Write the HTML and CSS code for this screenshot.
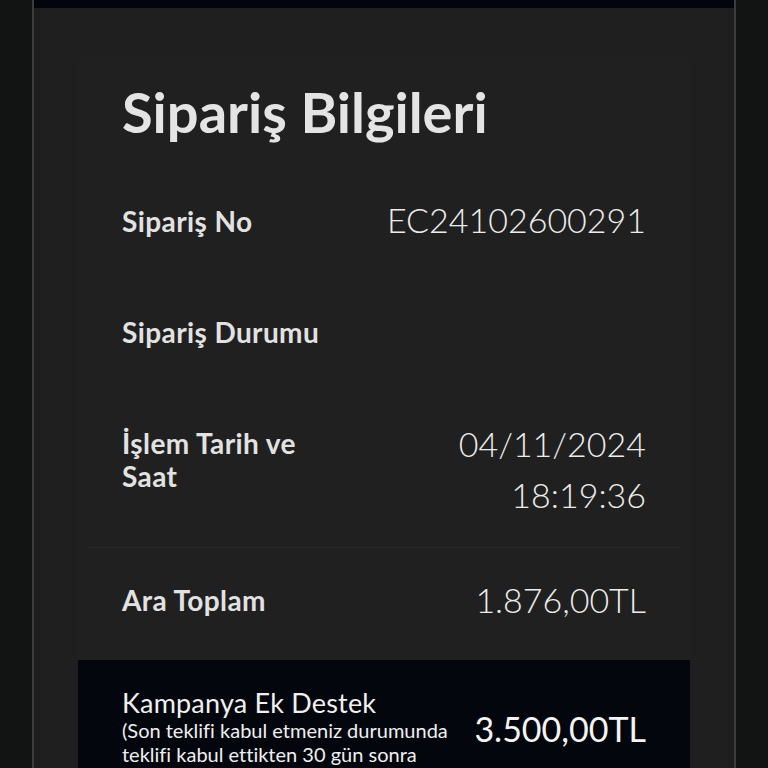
FILE: index.html
```html
<!DOCTYPE html>
<html lang="tr">
<head>
<meta charset="utf-8">
<link rel="stylesheet" href="styles.css">
</head>
<body>
<div class="frame">
  <div class="topbar"></div>
  <div class="card">
    <div class="header">
      <h1 class="title">Sipariş Bilgileri</h1>
    </div>
    <div class="rows">
      <div class="row row-no">
        <div class="label">Sipariş No</div>
        <div class="value">EC24102600291</div>
      </div>
      <div class="row row-status">
        <div class="label">Sipariş Durumu</div>
        <div class="value"></div>
      </div>
      <div class="row row-date">
        <div class="label">İşlem Tarih ve<br>Saat</div>
        <div class="value value-stack"><span>04/11/2024</span><span>18:19:36</span></div>
      </div>
      <div class="divider"></div>
      <div class="row row-sub">
        <div class="label">Ara Toplam</div>
        <div class="value">1.876,00TL</div>
      </div>
    </div>
    <div class="promo">
      <div class="promo-text">
        <div class="promo-title">Kampanya Ek Destek</div>
        <div class="promo-note">(Son teklifi kabul etmeniz durumunda teklifi kabul ettikten 30 gün sonra</div>
      </div>
      <div class="promo-value">3.500,00TL</div>
    </div>
  </div>
</div>
</body>
</html>
```

FILE: styles.css
```css
* { box-sizing: border-box; }
html, body {
  margin: 0;
  padding: 0;
  background: #111413;
  height: 768px;
  overflow: hidden;
}
body {
  font-family: "Lato", "Open Sans", sans-serif;
  color: #e6e6e6;
  font-variant-ligatures: none;
}
.frame {
  margin: 0 32px;
  height: 768px;
  border-left: 2px solid #3b3c3c;
  border-right: 2px solid #3b3c3c;
  background: #1f1f1f;
}
.topbar {
  height: 8px;
  background: #02050d;
}
.card {
  margin: 50px 44px 0;
  background: #202020;
}
.header {
  padding: 24px 44px 0;
  height: 145px;
}
.title {
  margin: 0;
  font-size: 56px;
  font-weight: 700;
  line-height: 60px;
  color: #e4e4e4;
}
.rows {
  padding: 0 44px;
}
.row {
  display: flex;
  justify-content: space-between;
  align-items: flex-start;
}
.label {
  font-size: 28px;
  font-weight: 700;
  line-height: 33px;
  letter-spacing: 0.4px;
  color: #e2e2e2;
  padding-top: 2px;
}
.value {
  font-size: 34px;
  font-weight: 300;
  line-height: 40px;
  color: #ececec;
  text-align: right;
  margin-top: -3px;
}
.row-no { height: 111px; }
.row-status { height: 111px; }
.row-date { height: 122px; }
.value-stack {
  display: flex;
  flex-direction: column;
  align-items: flex-end;
  line-height: 51px;
  margin-top: -7px;
}
.divider {
  height: 1px;
  background: #2a2a2a;
  margin: 0 -34px;
}
.row-sub {
  padding-top: 34px;
  height: 112px;
}
.row-sub .value { margin-top: -2px; }
.promo {
  background: #03060c;
  display: flex;
  justify-content: space-between;
  align-items: flex-start;
  padding: 27px 44px 20px;
}
.promo-text {
  width: 345px;
}
.promo-title {
  font-size: 27px;
  font-weight: 400;
  line-height: 31px;
  letter-spacing: 0.2px;
  color: #f0f0f0;
}
.promo-note {
  font-size: 20px;
  font-weight: 400;
  line-height: 24px;
  color: #f0f0f0;
}
.promo-value {
  font-size: 34px;
  font-weight: 400;
  line-height: 40px;
  color: #f4f4f4;
  margin-top: 22px;
}
```
